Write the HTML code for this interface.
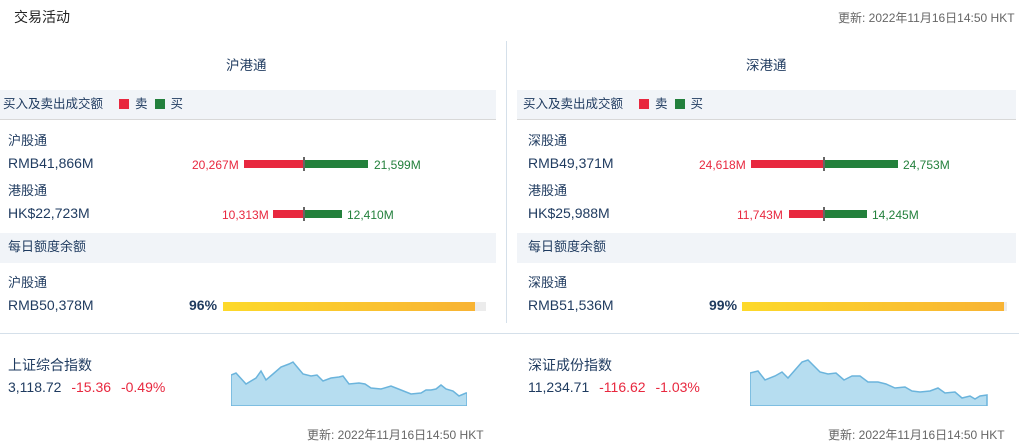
<!DOCTYPE html>
<html><head><meta charset="utf-8"><style>
*{margin:0;padding:0;box-sizing:border-box}
body{width:1019px;height:448px;background:#fff;position:relative;overflow:hidden;font-family:"Liberation Sans","Noto Sans CJK SC",sans-serif;color:#1e3a5f;font-size:13px}
.a{position:absolute;white-space:nowrap;line-height:16px}
.band{position:absolute;background:#f1f4f8}
.g{color:#666;font-size:12px}
.r{color:#e8283f}.gr{color:#23803c}
.bar{position:absolute;height:8px}
.tick{position:absolute;width:2px;height:14px;background:#666}
.sq{display:inline-block;width:10px;height:10px;vertical-align:-1px;margin:0 6px 0 16px}
</style></head><body>
<div class="a" style="left:14px;top:9px;font-size:14px;color:#222">交易活动</div>
<div class="a g" style="left:838px;top:10px">更新: 2022年11月16日14:50 HKT</div>
<div style="position:absolute;left:506px;top:41px;width:1px;height:282px;background:#d5e0ea"></div>
<div style="position:absolute;left:0;top:333px;width:1019px;height:1px;background:#d5e0ea"></div>

<!-- left -->
<div class="a" style="left:226px;top:58px;font-size:13.5px">沪港通</div>
<div class="band" style="left:0;top:90px;width:496px;height:30px;border-bottom:1px solid #d8d8d8"></div>
<div class="a" style="left:3px;top:96px;font-size:12.5px">买入及卖出成交额<span class="sq" style="background:#e8283f"></span>卖<span class="sq" style="background:#23803c;margin-left:7px"></span>买</div>
<div class="a" style="left:8px;top:133px">沪股通</div>
<div class="a" style="left:8px;top:155px;font-size:14px">RMB41,866M</div>
<div class="a r" style="left:192px;top:157px;font-size:12px">20,267M</div>
<div class="bar" style="left:244px;top:160px;width:60px;background:#e8283f"></div>
<div class="bar" style="left:304px;top:160px;width:64px;background:#23803c"></div>
<div class="tick" style="left:303px;top:157px"></div>
<div class="a gr" style="left:374px;top:157px;font-size:12px">21,599M</div>
<div class="a" style="left:8px;top:183px">港股通</div>
<div class="a" style="left:8px;top:205px;font-size:14px">HK$22,723M</div>
<div class="a r" style="left:222px;top:207px;font-size:12px">10,313M</div>
<div class="bar" style="left:273px;top:210px;width:31px;background:#e8283f"></div>
<div class="bar" style="left:304px;top:210px;width:38px;background:#23803c"></div>
<div class="tick" style="left:303px;top:207px"></div>
<div class="a gr" style="left:347px;top:207px;font-size:12px">12,410M</div>
<div class="band" style="left:0;top:233px;width:496px;height:30px"></div>
<div class="a" style="left:8px;top:239px">每日额度余额</div>
<div class="a" style="left:8px;top:275px">沪股通</div>
<div class="a" style="left:8px;top:297px;font-size:14px">RMB50,378M</div>
<div class="a" style="left:189px;top:297px;font-weight:bold;font-size:14px">96%</div>
<div class="bar" style="left:223px;top:302px;width:263px;height:9px;background:#ececec"></div>
<div class="bar" style="left:223px;top:302px;width:252px;height:9px;background:linear-gradient(90deg,#fdd92a,#f8b334)"></div>

<!-- right -->
<div class="a" style="left:746px;top:58px;font-size:13.5px">深港通</div>
<div class="band" style="left:517px;top:90px;width:499px;height:30px;border-bottom:1px solid #d8d8d8"></div>
<div class="a" style="left:523px;top:96px;font-size:12.5px">买入及卖出成交额<span class="sq" style="background:#e8283f"></span>卖<span class="sq" style="background:#23803c;margin-left:7px"></span>买</div>
<div class="a" style="left:528px;top:133px">深股通</div>
<div class="a" style="left:528px;top:155px;font-size:14px">RMB49,371M</div>
<div class="a r" style="left:699px;top:157px;font-size:12px">24,618M</div>
<div class="bar" style="left:751px;top:160px;width:72px;background:#e8283f"></div>
<div class="bar" style="left:823px;top:160px;width:75px;background:#23803c"></div>
<div class="tick" style="left:823px;top:157px"></div>
<div class="a gr" style="left:903px;top:157px;font-size:12px">24,753M</div>
<div class="a" style="left:528px;top:183px">港股通</div>
<div class="a" style="left:528px;top:205px;font-size:14px">HK$25,988M</div>
<div class="a r" style="left:737px;top:207px;font-size:12px">11,743M</div>
<div class="bar" style="left:789px;top:210px;width:34px;background:#e8283f"></div>
<div class="bar" style="left:823px;top:210px;width:44px;background:#23803c"></div>
<div class="tick" style="left:823px;top:207px"></div>
<div class="a gr" style="left:872px;top:207px;font-size:12px">14,245M</div>
<div class="band" style="left:517px;top:233px;width:499px;height:30px"></div>
<div class="a" style="left:528px;top:239px">每日额度余额</div>
<div class="a" style="left:528px;top:275px">深股通</div>
<div class="a" style="left:528px;top:297px;font-size:14px">RMB51,536M</div>
<div class="a" style="left:709px;top:297px;font-weight:bold;font-size:14px">99%</div>
<div class="bar" style="left:742px;top:302px;width:265px;height:9px;background:#ececec"></div>
<div class="bar" style="left:742px;top:302px;width:262px;height:9px;background:linear-gradient(90deg,#fdd92a,#f8b334)"></div>

<!-- indices -->
<div class="a" style="left:8px;top:357px;font-size:14px">上证综合指数</div>
<div class="a" style="left:8px;top:379px;font-size:14px">3,118.72 <span class="r" style="margin-left:6px">-15.36</span> <span class="r" style="margin-left:6px">-0.49%</span></div>
<svg style="position:absolute;left:231px;top:358px" width="236" height="48" viewBox="0 0 236 48">
<path d="M0,17 L5,15 L15,26 L25,20 L30,13 L35,22 L42,16 L50,9 L58,6 L62,4 L67,10 L72,16 L80,18 L86,17 L92,23 L100,20 L108,19 L112,18 L118,26 L128,25 L134,26 L140,30 L150,31 L160,28 L170,32 L180,36 L190,35 L195,32 L200,32 L205,31 L210,27 L215,31 L222,33 L228,38 L235,35 L236,35 L236,48 L0,48 Z" fill="#b6ddf0" stroke="#6bb4dc" stroke-width="1.5"/>
</svg>
<div class="a g" style="left:307px;top:427px">更新: 2022年11月16日14:50 HKT</div>

<div class="a" style="left:528px;top:357px;font-size:14px">深证成份指数</div>
<div class="a" style="left:528px;top:379px;font-size:14px">11,234.71 <span class="r" style="margin-left:6px">-116.62</span> <span class="r" style="margin-left:6px">-1.03%</span></div>
<svg style="position:absolute;left:750px;top:358px" width="238" height="48" viewBox="0 0 238 48">
<path d="M0,15 L8,13 L15,22 L25,18 L32,14 L38,20 L45,12 L52,4 L58,2 L64,8 L70,14 L78,16 L86,15 L94,22 L102,18 L110,18 L118,24 L128,24 L136,26 L145,30 L155,29 L162,33 L170,34 L180,33 L188,30 L195,35 L205,34 L212,40 L220,38 L225,41 L230,38 L237,37 L237,48 L0,48 Z" fill="#b6ddf0" stroke="#6bb4dc" stroke-width="1.5"/>
</svg>
<div class="a g" style="left:828px;top:427px">更新: 2022年11月16日14:50 HKT</div>
</body></html>
